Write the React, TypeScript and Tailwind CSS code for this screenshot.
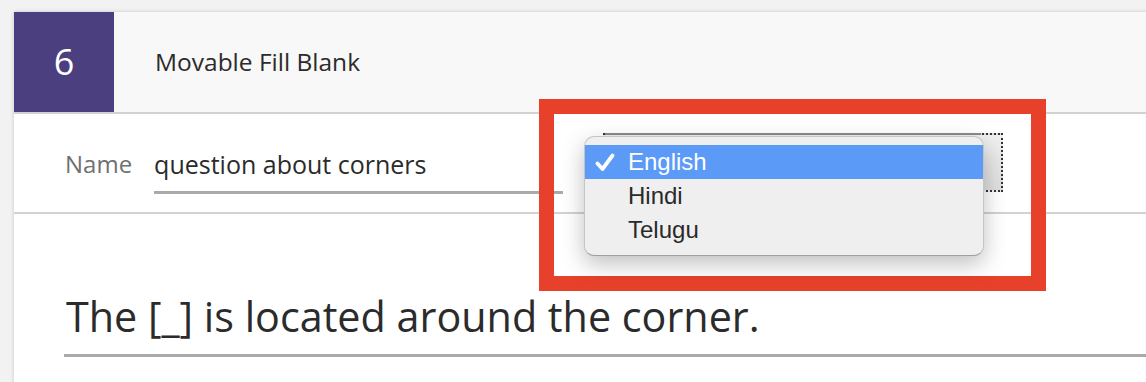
export default function App() {
  return (
    <div className="relative w-[1146px] h-[382px] overflow-hidden bg-[#f2f2f2] pt-[12px] pl-[14px] font-['Open_Sans',sans-serif]">
      {/* Card */}
      <div className="w-[1200px] h-[400px] bg-white shadow-[0_0_4px_rgba(0,0,0,0.18)]">
        {/* Header */}
        <div className="flex items-center h-[102px] bg-[#f8f8f8] border-b-2 border-[#d2d2d2]">
          <div className="w-[100px] h-[100px] self-start flex items-center justify-center bg-[#4b3f80] text-white text-[36px]">
            6
          </div>
          <div className="ml-[41px] text-[24.5px] text-[#2b2b2b]">Movable Fill Blank</div>
        </div>

        {/* Name row */}
        <div className="flex items-end h-[100px] pb-[18px] pl-[51px] border-b-2 border-[#d2d2d2]">
          <div className="pb-[15px] text-[24px] leading-[30px] text-[#707070]">Name</div>
          <div className="ml-[22px] w-[409px] pb-[12px] border-b-[3px] border-[#aaaaaa] text-[25px] leading-[30px] text-[#2b2b2b]">
            question about corners
          </div>
          <div className="ml-[40px] mb-[2px] w-[400px] h-[59px] border-2 border-dotted border-[#333] bg-gradient-to-b from-[#f0f0f0] to-[#dedede]">
            <div className="-mt-[2px] w-[376px] border-t-2 border-[#8a8a8a]" />
          </div>
        </div>

        {/* Question text */}
        <div className="ml-[50px] pt-[76px] pb-[12px] pl-[2px] border-b-[3px] border-[#aaaaaa]">
          <div className="text-[41.3px] leading-[52px] text-[#2b2b2b]">
            The [_] is located around the corner.
          </div>
        </div>
      </div>

      {/* Annotation box */}
      <div className="absolute left-[539px] top-[99px] w-[507px] h-[192px] border-[15px] border-[#e8412b]" />

      {/* Open select menu */}
      <div className="absolute left-[584px] top-[136px] w-[400px] py-[8px] rounded-[10px] bg-[#efefef] border border-[#c4c4c4] border-b-[#a0a0a0] shadow-[0_8px_22px_rgba(0,0,0,0.25)] font-['Liberation_Sans',Arial,sans-serif] text-[24px]">
        <div className="relative flex items-center h-[34px] pl-[43px] bg-[#5b9af6] text-white">
          <svg className="absolute left-[10px] top-[8px]" width="20" height="19" viewBox="0 0 20 19">
            <path d="M2.5 10.5 L7.5 16 L17.5 2.5" fill="none" stroke="white" strokeWidth="3.8" strokeLinecap="round" strokeLinejoin="round" />
          </svg>
          English
        </div>
        <div className="flex items-center h-[34px] pl-[43px] text-[#2a2a2a]">Hindi</div>
        <div className="flex items-center h-[34px] pl-[43px] text-[#2a2a2a]">Telugu</div>
      </div>
    </div>
  )
}
